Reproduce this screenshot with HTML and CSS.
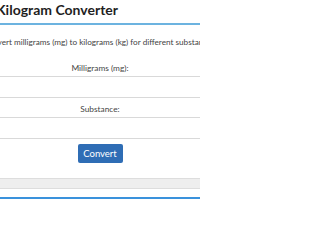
FILE: index.html
```html
<!DOCTYPE html>
<html lang="en">
<head>
<meta charset="utf-8">
<title>Milligram to Kilogram Converter</title>
<link rel="stylesheet" href="styles.css">
</head>
<body>
<div class="page">
<div class="container">
  <h1 class="title">Milligram to Kilogram Converter</h1>
  <p class="intro">Convert milligrams (mg) to kilograms (kg) for different substances.</p>
  <form class="form">
    <label class="label" for="mg">Milligrams (mg):</label>
    <input class="field" id="mg" type="text">
    <label class="label" for="sub">Substance:</label>
    <input class="field" id="sub" type="text">
    <button class="btn" type="button">Convert</button>
  </form>
  <div class="result"></div>
  <div class="info"></div>
</div>
</div>
</body>
</html>
```
FILE: styles.css
```css
html, body {
  margin: 0;
  padding: 0;
  background: #fff;
  overflow: hidden;
}
body {
  font-family: "Lato", "Liberation Sans", sans-serif;
  color: #333;
}
.page {
  width: 200px;
  height: 200px;
  overflow: hidden;
  display: flex;
  flex-direction: column;
  align-items: center;
}
.container {
  width: 600px;
  flex: none;
}
.title {
  margin: 0;
  padding: 1px 282px 4px 0;
  text-align: right;
  font-size: 14px;
  line-height: 18px;
  font-weight: 700;
  color: #1f1f1f;
  white-space: nowrap;
  border-bottom: 2px solid #6cb3e0;
}
.intro {
  margin: 11px 0 0 0;
  text-align: center;
  font-size: 8.2px;
  line-height: 12px;
  color: #444;
  white-space: nowrap;
}
.form {
  display: flex;
  flex-direction: column;
  align-items: center;
  margin-top: 14px;
}
.label {
  font-size: 8.3px;
  line-height: 12px;
  color: #444;
  margin-bottom: 2px;
}
.field {
  box-sizing: border-box;
  width: 100%;
  height: 22px;
  border: 1px solid #d9d9d9;
  margin: 0 0 5px 0;
  padding: 0;
  background: #fff;
}
.btn {
  width: 45px;
  height: 19px;
  padding: 0;
  border: none;
  border-radius: 2px;
  background: #2f6db5;
  color: #fff;
  font-family: "Lato", "Liberation Sans", sans-serif;
  font-size: 9.5px;
}
.result {
  box-sizing: border-box;
  margin-top: 15px;
  height: 11px;
  background: #eee;
  border: 1px solid #ddd;
}
.info {
  margin-top: 8px;
  height: 20px;
  border-top: 2px solid #3a92dc;
}
```
